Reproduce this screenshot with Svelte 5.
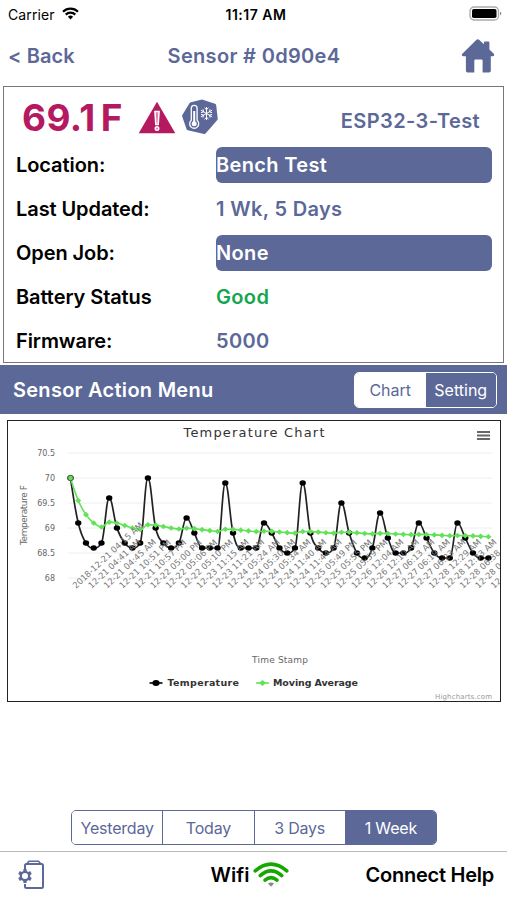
<script>
  const rows = [
    { label: 'Location:', value: 'Bench Test', kind: 'button' },
    { label: 'Last Updated:', value: '1 Wk, 5 Days', kind: 'plain' },
    { label: 'Open Job:', value: 'None', kind: 'button' },
    { label: 'Battery Status', value: 'Good', kind: 'good' },
    { label: 'Firmware:', value: '5000', kind: 'plain' },
  ];
  const ranges = ['Yesterday', 'Today', '3 Days', '1 Week'];
  let range = $state('1 Week');
  let tab = $state('Chart');

  const temps = [
    70, 69.1, 68.7, 68.6, 68.7, 69.6, 69, 68.7, 68.6, 68.7, 70, 69, 68.7, 68.6, 68.7,
    69.2, 68.9, 68.6, 68.6, 68.6, 69.9, 68.9, 68.6, 68.6, 68.6, 69.1, 68.9, 68.6, 68.5, 68.6,
    69.9, 68.9, 68.6, 68.5, 68.6, 69.5, 68.9, 68.5, 68.4, 68.6, 69.3, 68.8, 68.5, 68.5, 68.6,
    69.1, 68.8, 68.5, 68.4, 68.4, 69.1, 68.8, 68.5, 68.4, 68.4,
  ];
  // the last three run out of room at the right edge
  const stamps = [
    '2018-12-21 04:15 AM', '12-21 04:41 AM', '12-21 04:45 AM', '12-21 10:51 PM', '12-21 10:57 PM',
    '12-22 05:00 PM', '12-22 05:06 PM', '12-22 05:10 PM', '12-23 11:15 AM', '12-23 11:21 AM',
    '12-24 05:24 AM', '12-24 05:30 AM', '12-24 05:34 AM', '12-24 11:40 AM', '12-24 11:44 AM',
    '12-25 05:49 PM', '12-25 05:55 PM', '12-25 05:59 PM', '12-26 12:04 AM', '12-26 12:10 AM',
    '12-27 06:13 AM', '12-27 06:19 AM', '12-27 06:23 AM', '12-28 12:29 AM', '12-28 12:33 AM',
    '12-28 06:38', '12-28 0', '12',
  ];
  const grid = [70.5, 70, 69.5, 69, 68.5, 68];

  // plot coordinates inside the chart svg
  const px = (i) => 62.5 + i * 7.74;
  const py = (v) => 57 + (70 - v) * 50;

  let sum = 0;
  const averages = temps.map((t, i) => {
    sum += t;
    return sum / (i + 1);
  });

  const tempPoints = temps.map((t, i) => ({ x: px(i), y: py(t) }));
  const avgPoints = averages.map((t, i) => ({ x: px(i), y: py(t) }));

  function spline(pts) {
    let d = `M${pts[0].x} ${pts[0].y}`;
    let prevRight = pts[0];
    for (let i = 1; i < pts.length; i++) {
      const p = pts[i];
      const last = pts[i - 1];
      const next = pts[i + 1];
      let left = p;
      let right = p;
      if (next) {
        const lx = (1.5 * p.x + last.x) / 2.5;
        const rx = (1.5 * p.x + next.x) / 2.5;
        let ly = (1.5 * p.y + last.y) / 2.5;
        let ry = (1.5 * p.y + next.y) / 2.5;
        const fix = ((ry - ly) * (rx - p.x)) / (rx - lx) + p.y - ry;
        ly += fix;
        ry += fix;
        // keep the control points from overshooting the neighbours
        if (ly > last.y && ly > p.y) {
          ly = Math.max(last.y, p.y);
          ry = 2 * p.y - ly;
        } else if (ly < last.y && ly < p.y) {
          ly = Math.min(last.y, p.y);
          ry = 2 * p.y - ly;
        }
        if (ry > next.y && ry > p.y) {
          ry = Math.max(next.y, p.y);
          ly = 2 * p.y - ry;
        } else if (ry < next.y && ry < p.y) {
          ry = Math.min(next.y, p.y);
          ly = 2 * p.y - ry;
        }
        left = { x: lx, y: ly };
        right = { x: rx, y: ry };
      }
      d += `C${prevRight.x} ${prevRight.y} ${left.x} ${left.y} ${p.x} ${p.y}`;
      prevRight = right;
    }
    return d;
  }
</script>

<div class="screen">
  <div class="status">
    <div class="carrier">
      <span>Carrier</span>
      <svg width="17" height="13" viewBox="0 0 17 13" fill="none" stroke="#000" stroke-width="2.2">
        <path d="M1 4.7a10.7 10.7 0 0 1 15 0" />
        <path d="M3.7 7.6a6.8 6.8 0 0 1 9.6 0" />
        <path d="M8.5 12.4 5.9 9.8a3.7 3.7 0 0 1 5.2 0z" fill="#000" stroke="none" />
      </svg>
    </div>
    <span class="clock">11:17 AM</span>
    <svg class="battery" width="33" height="15" viewBox="0 0 33 15">
      <rect x="1" y="1" width="28.5" height="13" rx="4" fill="#fff" stroke="#aaa" stroke-width="1.3" />
      <rect x="3" y="3" width="24.5" height="9" rx="1.8" />
      <path d="M31 5.5v4q1.3-.8 1.3-2t-1.3-2z" fill="#888" />
    </svg>
  </div>

  <header>
    <span class="back">&lt; Back</span>
    <span class="title">Sensor # 0d90e4</span>
    <svg class="home" width="34" height="34" viewBox="0 0 34 34" fill="#5c6898">
      <path d="M15.5.8q1.3-1.2 2.6 0l4.8 4.4V3.4q0-1 1-1h3.5q1 0 1 1v7l4.2 4.2q1.5 2.2-.7 2.6h-2.1v14.6q0 1.7-1.7 1.7h-6.5V21.5q0-1-1-1h-6.3q-1 0-1 1v12H6.6q-1.7 0-1.7-1.7V17.2H2.3q-2.5-.4-1-2.5z" />
    </svg>
  </header>

  <section class="info">
    <div class="reading">
      <span class="temp">69.1 F</span>
      <svg class="warn" width="38" height="33" viewBox="0 0 38 33">
        <path d="M19 .8 37.3 32.3H.7z" fill="#b5195f" />
        <path d="M16.9 10.5h4.2l-.9 13h-2.4z" fill="#d988ae" stroke="#fff" stroke-width="1.5" />
        <circle cx="19" cy="27.6" r="1.8" fill="#d988ae" stroke="#fff" stroke-width="1.4" />
      </svg>
      <svg class="hex" width="38" height="38" viewBox="0 0 38 38">
        <path d="M21 1.5 34 5.800q1 .4 1.200 1.400l1.500 13.300q.1 1-.6 1.800l-11.300 13q-.7.8-1.700.6L6.800 32.200q-1-.3-1.300-1.300L1.200 18.500q-.3-1 .3-1.800L8.300 5.400q.5-.8 1.500-1.100z" fill="#5c6898" />
        <g fill="none" stroke="#fff" stroke-width="1.3">
          <path d="M10.300 22.300V10.200a2.900 2.900 0 0 1 5.800 0v12.100a4.500 4.500 0 1 1-5.800 0z" />
          <path d="M13.200 13v12" stroke-width="2" />
          <path d="M25.500 9v13M19.900 12.200l11.200 6.600M19.900 18.800l11.200-6.600M23.500 9.800l2 1.900 2-1.900M23.500 21.200l2-1.900 2 1.900M20 14.600l2.600-.7-.7-2.600M31 16.400l-2.600.7.7 2.600M20 16.400l2.600.7-.7 2.600M31 14.600l-2.600-.7.7-2.600" stroke-width="1" />
        </g>
        <circle cx="13.2" cy="25.7" r="2.5" fill="#fff" />
      </svg>
      <span class="device">ESP32-3-Test</span>
    </div>
    {#each rows as row}
      <div class="row">
        <span class="label">{row.label}</span>
        <span class="value {row.kind}">{row.value}</span>
      </div>
    {/each}
  </section>

  <div class="menu">
    <span>Sensor Action Menu</span>
    <div class="tabs">
      {#each ['Chart', 'Setting'] as name}
        <button class:active={tab === name} onclick={() => (tab = name)}>{name}</button>
      {/each}
    </div>
  </div>

  <div class="chart">
    <svg width="492" height="280" viewBox="0 0 492 280">
      <text class="chart-title" x="246" y="16" text-anchor="middle" textLength="141">Temperature Chart</text>
      <path d="M469 11h13M469 14.5h13M469 18h13" stroke="#666" stroke-width="2" />
      {#each grid as g}
        <path d="M60 {py(g)}H484" stroke="#eeeef0" />
        <text class="tick" x="47" y={py(g) + 3} text-anchor="end">{g}</text>
      {/each}
      <text class="axis" transform="translate(19 94) rotate(-90)" text-anchor="middle" textLength="60">Temperature F</text>

      <path d={spline(tempPoints)} fill="none" stroke="#222" stroke-width="1.7" />
      {#each tempPoints as p}
        <ellipse cx={p.x} cy={p.y} rx="3.2" ry="2.8" />
      {/each}
      <path d={spline(avgPoints)} fill="none" stroke="#62e257" stroke-width="1.6" />
      {#each avgPoints as p}
        <path d="M{p.x - 3} {p.y}l3-2.8 3 2.8-3 2.8z" fill="#62e257" />
      {/each}
      <circle cx={px(0)} cy={py(70)} r="2.8" fill="#62dc57" stroke="#444" stroke-width=".8" />

      {#each stamps as stamp, i}
        <text class="stamp" transform="translate({68 + i * 15.48} 168) rotate(-43)">{stamp}</text>
      {/each}

      <text class="axis" x="272" y="242" text-anchor="middle" textLength="56">Time Stamp</text>
      <path d="M141.5 262h13" stroke="#000" stroke-width="1.6" />
      <ellipse cx="148" cy="262" rx="3.6" ry="2.9" />
      <text class="legend" x="159.5" y="265" textLength="71.5">Temperature</text>
      <path d="M248 262h13" stroke="#62e257" stroke-width="1.6" />
      <path d="M251 262l3.5-3 3.5 3-3.5 3z" fill="#62e257" />
      <text class="legend" x="265" y="265" textLength="85">Moving Average</text>
      <text class="credit" x="427" y="277.5" textLength="57">Highcharts.com</text>
    </svg>
  </div>

  <div class="ranges">
    {#each ranges as name}
      <button class:active={range === name} onclick={() => (range = name)}>{name}</button>
    {/each}
  </div>

  <footer>
    <svg width="28" height="30" viewBox="0 0 28 30" fill="none" stroke="#5c6898">
      <path d="M8 9V5.5Q8 4 9.5 4h15Q26 4 26 5.5v21q0 1.5-1.5 1.5h-15Q8 28 8 26.5V24" stroke-width="2" />
      <path d="M10 3.5 12 1.2h9.5l2 2.3" stroke-width="1.6" />
      <path d="M8 9v14M2 12.500l12 7M2 19.500l12-7" stroke-width="3.2" />
      <circle cx="8" cy="16" r="4.2" fill="#fff" stroke-width="2.3" />
    </svg>
    <div class="wifi">
      <span>Wifi</span>
      <svg width="36" height="26" viewBox="0 0 36 26" fill="none" stroke="#16a800" stroke-width="3.6" stroke-linecap="round">
        <path d="M2.2 8.8Q18-4.5 33.8 8.8" />
        <path d="M7.2 13.6Q18 4 28.8 13.6" />
        <path d="M12 18.2q6-5 12 0" />
        <path d="M18 24.8l-3-3.3q3-2 6 0z" fill="#888" stroke="none" />
      </svg>
    </div>
    <span class="help">Connect Help</span>
  </footer>
</div>

<style>
  :global(body) {
    margin: 0;
    background: #fff;
  }
  .screen {
    width: 507px;
    height: 900px;
    display: flex;
    flex-direction: column;
    overflow: hidden;
    font-family: Inter, 'Liberation Sans', sans-serif;
    color: #000;
  }
  svg {
    display: block;
    flex-shrink: 0;
  }
  button {
    font: inherit;
    letter-spacing: inherit;
    color: #5c6898;
    background: #fff;
    border: 0;
    padding: 0;
  }
  .status {
    height: 28px;
    box-sizing: border-box;
    padding: 0 7px 0 8px;
    display: grid;
    grid-template-columns: 1fr auto 1fr;
    align-items: center;
    font-size: 14px;
  }
  .carrier {
    display: flex;
    align-items: center;
    gap: 7px;
    letter-spacing: 0.1px;
  }
  .carrier svg {
    margin-top: -2px;
  }
  .clock {
    padding-left: 4px;
    font-weight: 600;
    letter-spacing: 0.5px;
  }
  .battery {
    justify-self: end;
    margin-right: -2px;
    margin-top: -2px;
  }
  header {
    height: 58px;
    box-sizing: border-box;
    padding: 0 12px 2px 8px;
    display: grid;
    grid-template-columns: 1fr auto 1fr;
    align-items: center;
    font-size: 20px;
    font-weight: 600;
    color: #5c6898;
  }
  .back {
    letter-spacing: 0.1px;
  }
  .title {
    padding-left: 5px;
    letter-spacing: 0.33px;
  }
  .home {
    justify-self: end;
  }
  .info {
    height: 277px;
    box-sizing: border-box;
    margin: 0 3px;
    border: 1px solid #777;
    padding: 0 11px 0 12px;
    font-weight: 600;
    font-size: 20px;
  }
  .reading {
    height: 56px;
    display: flex;
    align-items: flex-start;
    color: #5c6898;
  }
  .temp {
    width: 117px;
    padding: 8px 0 0 6px;
    box-sizing: border-box;
    color: #b5195f;
    font-size: 37px;
    font-weight: 700;
    line-height: 45px;
    letter-spacing: 0.4px;
    word-spacing: -4px;
    white-space: nowrap;
  }
  .warn {
    margin: 14px 0 0 5px;
  }
  .hex {
    margin: 11px 0 0 5px;
  }
  .device {
    margin: 22px 12px 0 auto;
    line-height: 24px;
    letter-spacing: 0.4px;
  }
  .row {
    height: 44px;
    display: grid;
    grid-template-columns: 200px 1fr;
    align-items: center;
  }
  .label {
    letter-spacing: -0.08px;
  }
  .value {
    color: #5c6898;
    line-height: 36px;
    letter-spacing: 0.35px;
  }
  .value.button {
    color: #fff;
    background: #5c6898;
    border-radius: 6px;
  }
  .value.good {
    color: #12a650;
  }
  .menu {
    height: 49px;
    margin-top: 2px;
    box-sizing: border-box;
    padding: 0 10px 0 13px;
    display: flex;
    align-items: center;
    justify-content: space-between;
    background: #5c6898;
    color: #fff;
    font-size: 20px;
    font-weight: 600;
    letter-spacing: 0.27px;
  }
  .tabs {
    width: 143px;
    height: 36px;
    box-sizing: border-box;
    display: flex;
    border: 1px solid #fff;
    border-radius: 5px;
    overflow: hidden;
    font-size: 16px;
    font-weight: 400;
    letter-spacing: 0;
  }
  .tabs button {
    flex: 1;
    background: #5c6898;
    color: #fff;
  }
  .tabs .active {
    background: #fff;
    color: #5c6898;
  }
  .chart {
    width: 494px;
    height: 282px;
    box-sizing: border-box;
    margin: 6px 0 0 7px;
    border: 1px solid #222;
    font-family: 'DejaVu Sans', sans-serif;
    fill: #666;
  }
  .chart-title {
    font-size: 13px;
    fill: #333;
  }
  .tick {
    font-size: 8px;
  }
  .stamp {
    font-size: 8.5px;
    fill: #777;
  }
  .axis {
    font-size: 9px;
  }
  .legend {
    font-size: 9.5px;
    font-weight: 700;
    fill: #333;
  }
  .credit {
    font-size: 7px;
    fill: #999;
  }
  .chart ellipse {
    fill: #000;
  }
  .ranges {
    width: 366px;
    height: 35px;
    box-sizing: border-box;
    margin: 108px 0 0 71px;
    display: flex;
    border: 1px solid #5c6898;
    border-radius: 5px;
    overflow: hidden;
    font-size: 16px;
    letter-spacing: -0.2px;
  }
  .ranges button {
    flex: 1;
  }
  .ranges button + button {
    border-left: 1px solid #5c6898;
  }
  .ranges .active {
    background: #5c6898;
    color: #fff;
  }
  footer {
    height: 49px;
    margin-top: 6px;
    box-sizing: border-box;
    border-top: 1.5px solid #bbb;
    padding: 0 13px 2px 17px;
    display: grid;
    grid-template-columns: 1fr auto 1fr;
    align-items: center;
    font-size: 20px;
    font-weight: 600;
  }
  .wifi {
    display: flex;
    align-items: center;
    gap: 4px;
    padding-right: 11px;
  }
  .help {
    justify-self: end;
    letter-spacing: -0.25px;
  }
</style>
